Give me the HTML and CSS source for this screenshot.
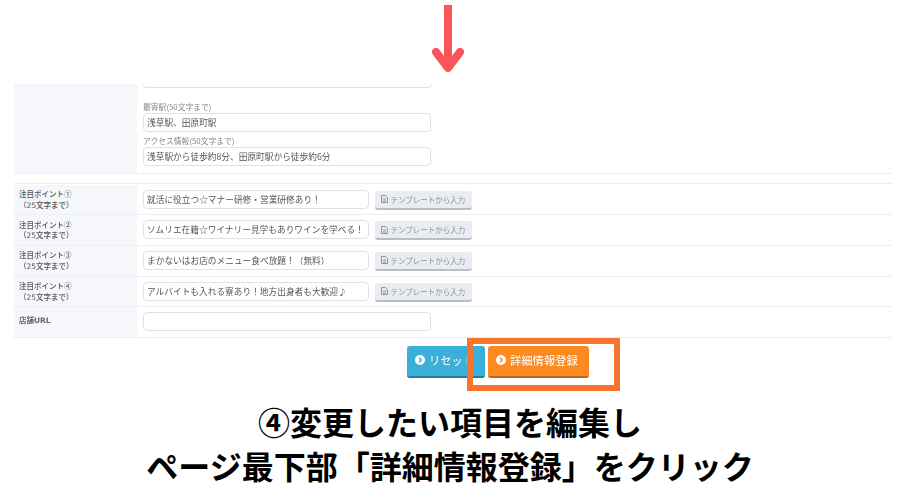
FILE: index.html
```html
<!DOCTYPE html>
<html lang="ja">

<head>
  <meta charset="UTF-8" />
  <title>詳細情報登録</title>
  <link rel="stylesheet" href="styles.css">
</head>

<body>
  <!-- Arrow pointing at the form -->
  <svg class="arrow" width="36" height="70" viewBox="0 0 36 70">
    <path d="M18 1V62" fill="none" stroke="#fb5559" stroke-width="8" />
    <path d="M6 48L18 64L30 48" fill="none" stroke="#fb5559" stroke-width="8" stroke-linecap="round" stroke-linejoin="round" />
  </svg>

  <div class="form-shot">
    <!-- Access section, cut off at the top -->
    <div class="row row-access">
      <div class="row-label"></div>
      <div class="row-body access-body">
        <div class="cut-field"></div>
        <div class="field-title first">最寄駅(50文字まで)</div>
        <input class="text-input wide" type="text" value="浅草駅、田原町駅" />
        <div class="field-title">アクセス情報(50文字まで)</div>
        <input class="text-input wide" type="text" value="浅草駅から徒歩約8分、田原町駅から徒歩約6分" />
      </div>
    </div>

    <!-- Points -->
    <div class="points">
      <div class="row">
        <div class="row-label">注目ポイント<span class="point-no">①</span><br>（25文字まで）</div>
        <div class="row-body">
          <input class="text-input" type="text" value="就活に役立つ☆マナー研修・営業研修あり！" />
          <button class="template-btn" type="button">
            <svg class="doc-icon" width="7" height="8" viewBox="0 0 7 8"><path d="M.5 .5H4.5L6.5 2.5V7.5H.5ZM2 4H5M2 6H5" fill="none" stroke="#8b939c" stroke-width="1" /></svg>
            テンプレートから入力
          </button>
        </div>
      </div>
      <div class="row">
        <div class="row-label">注目ポイント<span class="point-no">②</span><br>（25文字まで）</div>
        <div class="row-body">
          <input class="text-input" type="text" value="ソムリエ在籍☆ワイナリー見学もありワインを学べる！" />
          <button class="template-btn" type="button">
            <svg class="doc-icon" width="7" height="8" viewBox="0 0 7 8"><path d="M.5 .5H4.5L6.5 2.5V7.5H.5ZM2 4H5M2 6H5" fill="none" stroke="#8b939c" stroke-width="1" /></svg>
            テンプレートから入力
          </button>
        </div>
      </div>
      <div class="row">
        <div class="row-label">注目ポイント<span class="point-no">③</span><br>（25文字まで）</div>
        <div class="row-body">
          <input class="text-input" type="text" value="まかないはお店のメニュー食べ放題！（無料）" />
          <button class="template-btn" type="button">
            <svg class="doc-icon" width="7" height="8" viewBox="0 0 7 8"><path d="M.5 .5H4.5L6.5 2.5V7.5H.5ZM2 4H5M2 6H5" fill="none" stroke="#8b939c" stroke-width="1" /></svg>
            テンプレートから入力
          </button>
        </div>
      </div>
      <div class="row">
        <div class="row-label">注目ポイント<span class="point-no">④</span><br>（25文字まで）</div>
        <div class="row-body">
          <input class="text-input" type="text" value="アルバイトも入れる寮あり！地方出身者も大歓迎♪" />
          <button class="template-btn" type="button">
            <svg class="doc-icon" width="7" height="8" viewBox="0 0 7 8"><path d="M.5 .5H4.5L6.5 2.5V7.5H.5ZM2 4H5M2 6H5" fill="none" stroke="#8b939c" stroke-width="1" /></svg>
            テンプレートから入力
          </button>
        </div>
      </div>
      <div class="row">
        <div class="row-label url-label">店舗URL</div>
        <div class="row-body">
          <input class="text-input wide" type="text" />
        </div>
      </div>
    </div>

    <!-- Actions -->
    <div class="actions">
      <button class="action-btn reset" type="button">
        <svg width="10" height="10" viewBox="0 0 10 10"><circle cx="5" cy="5" r="5" fill="#fff" /><path d="M4 2.7L6.2 5L4 7.3" fill="none" stroke="#3aafd9" stroke-width="1.5" /></svg>
        リセット
      </button>
      <button class="action-btn submit" type="button">
        <svg width="10" height="10" viewBox="0 0 10 10"><circle cx="5" cy="5" r="5" fill="#fff" /><path d="M4 2.7L6.2 5L4 7.3" fill="none" stroke="#fd8a20" stroke-width="1.5" /></svg>
        詳細情報登録
      </button>
    </div>
  </div>

  <!-- Highlight around the submit button -->
  <div class="highlight"></div>

  <div class="caption">
    <p>④変更したい項目を編集し</p>
    <p>ページ最下部「詳細情報登録」をクリック</p>
  </div>
</body>

</html>
```

FILE: styles.css
```css
/* Reset some basic styles */
* {
  margin: 0;
  padding: 0;
  box-sizing: border-box;
}

html,
body {
  width: 900px;
  height: 502px;
  overflow: hidden;
  background: #fff;
  font-family: "Noto Sans CJK JP", "Noto Sans", sans-serif;
}

body {
  position: relative;
  padding-top: 84px;
}

/* Overlays */
.arrow {
  position: absolute;
  left: 430px;
  top: 4px;
}

.highlight {
  position: absolute;
  left: 467px;
  top: 338px;
  width: 153px;
  height: 53px;
  border: 6px solid #f4752b;
}

/* Screenshot of the form */
.form-shot {
  width: 878px;
  margin-left: 14px;
  color: #555;
  filter: blur(0.3px);
}

.row {
  display: flex;
  border-bottom: 1px solid #eceef1;
}

.row-label {
  width: 123px;
  flex-shrink: 0;
  padding: 4.5px 0 0 5px;
  background: #f5f7fa;
  font-family: "DejaVu Sans", "Noto Sans CJK JP", sans-serif;
  font-size: 7.5px;
  line-height: 10.7px;
  font-weight: 500;
  color: #555;
}

.point-no {
  font-family: "Noto Sans CJK JP", sans-serif;
}

.url-label {
  padding-top: 9px;
  font-weight: 700;
  color: #666;
}

.row-body {
  flex: 1;
  display: flex;
  align-items: flex-start;
  gap: 5.5px;
  padding: 5px 0 0 6px;
  height: 29.7px;
}

.access-body {
  display: block;
  padding-top: 0;
  height: 89px;
}

.row-access {
  height: 90px;
}

.cut-field {
  width: 288px;
  height: 4px;
  border: 1px solid #dfe1e4;
  border-top: none;
  border-radius: 0 0 5px 5px;
}

.field-title {
  font-size: 7.8px;
  line-height: 9px;
  padding-bottom: 2px;
  color: #888;
  margin-top: 3.5px;
}

.field-title.first {
  margin-top: 14px;
}

.text-input {
  display: block;
  width: 226px;
  height: 19px;
  padding: 0 0 0 3px;
  border: 1px solid #dfe1e4;
  border-radius: 4px;
  font-family: inherit;
  font-size: 8.7px;
  color: #555;
  background: #fff;
}

.text-input.wide {
  width: 288px;
}

.points {
  margin-top: 9px;
  padding-top: 0.5px;
  border-top: 1px solid #eceef1;
}

.template-btn {
  display: flex;
  align-items: center;
  gap: 3px;
  width: 97px;
  height: 19px;
  margin-top: 1px;
  padding-left: 6px;
  border: none;
  border-bottom: 2px solid #b9bec4;
  border-radius: 3px;
  background: #e9ecf0;
  font-family: inherit;
  font-size: 7.5px;
  color: #8b939c;
}

.doc-icon {
  flex-shrink: 0;
}

/* Buttons */
.actions {
  display: flex;
  gap: 3px;
  margin: 8.5px 0 0 393px;
}

.action-btn {
  display: flex;
  align-items: center;
  gap: 4px;
  height: 32px;
  padding: 0 0 2px 8px;
  border: none;
  border-radius: 3px;
  font-family: inherit;
  font-size: 11.3px;
  color: #fff;
}

.reset {
  width: 78px;
  background: #3aafd9;
  border-bottom: 2px solid #1f7f9e;
}

.submit {
  width: 101px;
  background: #fd8a20;
  border-bottom: 2px solid #c2661a;
}

/* Caption */
.caption {
  margin-top: 22px;
  text-align: center;
  font-size: 32px;
  line-height: 43.5px;
  font-weight: 700;
  color: #000;
}
```
